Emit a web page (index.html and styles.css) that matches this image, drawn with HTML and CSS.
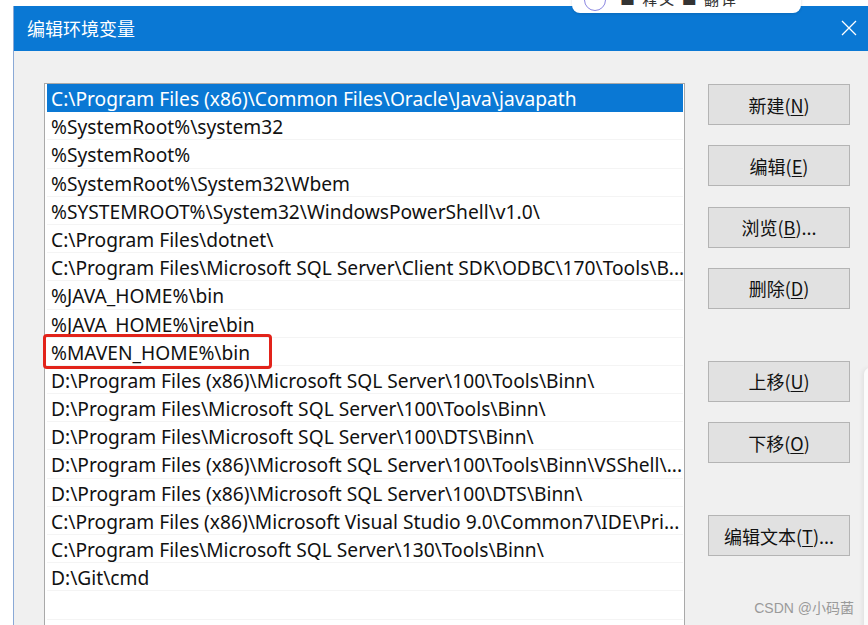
FILE: index.html
```html
<!DOCTYPE html>
<html lang="zh-CN">
<head>
<meta charset="utf-8">
<title>编辑环境变量</title>
<link rel="stylesheet" href="styles.css">
</head>
<body>
<div class="screen">
  <div class="dialog">
    <div class="titlebar">
      <span class="title">编辑环境变量</span>
      <svg class="close" width="16" height="16" viewBox="0 0 16 16"><path d="M1 1 L15 15 M15 1 L1 15" stroke="#fff" stroke-width="1.3" fill="none"/></svg>
    </div>
    <div class="body">
      <div class="listwrap">
        <div class="list">
          <div class="row selected">C:\Program Files (x86)\Common Files\Oracle\Java\javapath</div>
          <div class="row">%SystemRoot%\system32</div>
          <div class="row">%SystemRoot%</div>
          <div class="row">%SystemRoot%\System32\Wbem</div>
          <div class="row">%SYSTEMROOT%\System32\WindowsPowerShell\v1.0\</div>
          <div class="row">C:\Program Files\dotnet\</div>
          <div class="row">C:\Program Files\Microsoft SQL Server\Client SDK\ODBC\170\Tools\B...</div>
          <div class="row">%JAVA_HOME%\bin</div>
          <div class="row">%JAVA_HOME%\jre\bin</div>
          <div class="row">%MAVEN_HOME%\bin</div>
          <div class="row">D:\Program Files (x86)\Microsoft SQL Server\100\Tools\Binn\</div>
          <div class="row">D:\Program Files\Microsoft SQL Server\100\Tools\Binn\</div>
          <div class="row">D:\Program Files\Microsoft SQL Server\100\DTS\Binn\</div>
          <div class="row">D:\Program Files (x86)\Microsoft SQL Server\100\Tools\Binn\VSShell\...</div>
          <div class="row">D:\Program Files (x86)\Microsoft SQL Server\100\DTS\Binn\</div>
          <div class="row">C:\Program Files (x86)\Microsoft Visual Studio 9.0\Common7\IDE\Pri...</div>
          <div class="row">C:\Program Files\Microsoft SQL Server\130\Tools\Binn\</div>
          <div class="row">D:\Git\cmd</div>
          <div class="row"></div>
        </div>
        <span class="mark"></span>
      </div>
      <div class="buttons">
        <div class="btn">新建(<u>N</u>)</div>
        <div class="btn">编辑(<u>E</u>)</div>
        <div class="btn">浏览(<u>B</u>)...</div>
        <div class="btn">删除(<u>D</u>)</div>
        <div class="btn group">上移(<u>U</u>)</div>
        <div class="btn">下移(<u>O</u>)</div>
        <div class="btn group">编辑文本(<u>T</u>)...</div>
      </div>
    </div>
  </div>
  <div class="popup">
    <span class="circle"></span>
    <span class="ptext">■ 释义 ■ 翻译</span>
  </div>
  <div class="edgepanel"></div>
  <div class="watermark">CSDN @小码菌</div>
</div>
</body>
</html>
```

FILE: styles.css
```css
* { box-sizing: border-box; }
html, body { margin: 0; padding: 0; }
body {
  font-family: "Noto Sans", "Noto Sans CJK SC", sans-serif;
  background: #fff;
}
.screen {
  position: relative;
  width: 868px;
  height: 625px;
  overflow: hidden;
  background: #fff;
}
.dialog {
  margin: 6px 0 0 13px;
  height: 619px;
  border-left: 1px solid #8aa9d6;
  background: #f0f0f0;
  display: flex;
  flex-direction: column;
  overflow: hidden;
}
.titlebar {
  flex-shrink: 0;
  height: 45px;
  background: #0a78d4;
  display: flex;
  align-items: center;
  justify-content: space-between;
  padding: 0 11px 0 13px;
  color: #fff;
}
.title {
  font-family: "Noto Sans CJK SC", sans-serif;
  font-size: 18px;
  margin-top: -2px;
}
.close { display: block; margin-top: -1px; }
.body {
  flex: 1;
  min-height: 0;
  display: flex;
  align-items: flex-start;
  padding: 32px 0 0 30px;
  overflow: hidden;
}
.listwrap {
  position: relative;
  flex-shrink: 0;
}
.list {
  width: 641px;
  height: 560px;
  background: #fff;
  border: 1px solid #a9a9a9;
  padding: 0 1px 0 2px;
  overflow: hidden;
}
.row {
  height: 28.2px;
  line-height: 29px;
  padding-left: 4px;
  font-size: 19.2px;
  color: #111;
  white-space: nowrap;
  border-bottom: 1px solid #f4f4f4;
}
.row.selected {
  background: #0a78d4;
  color: #fff;
  border-bottom-color: #0a78d4;
}
.mark {
  position: absolute;
  left: -1px;
  top: 251px;
  width: 229px;
  height: 35px;
  border: 3px solid #e2231a;
  border-radius: 4px;
  z-index: 1;
}
.buttons {
  flex-shrink: 0;
  margin-left: 23px;
  margin-top: 1px;
  width: 142px;
  display: flex;
  flex-direction: column;
  gap: 20.3px;
}
.btn {
  height: 41px;
  background: #e1e1e1;
  border: 1px solid #b4b4b4;
  display: flex;
  align-items: center;
  justify-content: center;
  font-family: "Noto Sans CJK SC", sans-serif;
  font-size: 18px;
  color: #111;
}
.btn u { text-underline-offset: 2px; }
.btn.group { margin-top: 31.7px; }
.popup {
  position: absolute;
  left: 572px;
  top: -10px;
  width: 229px;
  height: 23px;
  background: #fff;
  border-radius: 8px;
  box-shadow: 0 1px 3px rgba(0,0,0,0.12);
  display: flex;
  align-items: center;
  padding-left: 12px;
  gap: 14px;
  overflow: hidden;
}
.circle {
  width: 22px;
  height: 22px;
  border-radius: 50%;
  border: 1.5px solid #8a86e0;
  margin-top: -4px;
}
.ptext {
  font-family: "Noto Sans CJK SC", sans-serif;
  font-size: 15px;
  color: #333;
  margin-top: -6px;
  letter-spacing: 2px;
}
.edgepanel {
  position: absolute;
  left: 864px;
  top: 368px;
  width: 10px;
  height: 260px;
  background: #fbfbfb;
  border-radius: 6px 0 0 0;
  box-shadow: -2px 0 4px rgba(0,0,0,0.06);
}
.watermark {
  position: absolute;
  right: 14px;
  bottom: 8px;
  font-family: "Liberation Sans", "Noto Sans CJK SC", sans-serif;
  font-size: 14px;
  color: #9a9a9a;
}
```
